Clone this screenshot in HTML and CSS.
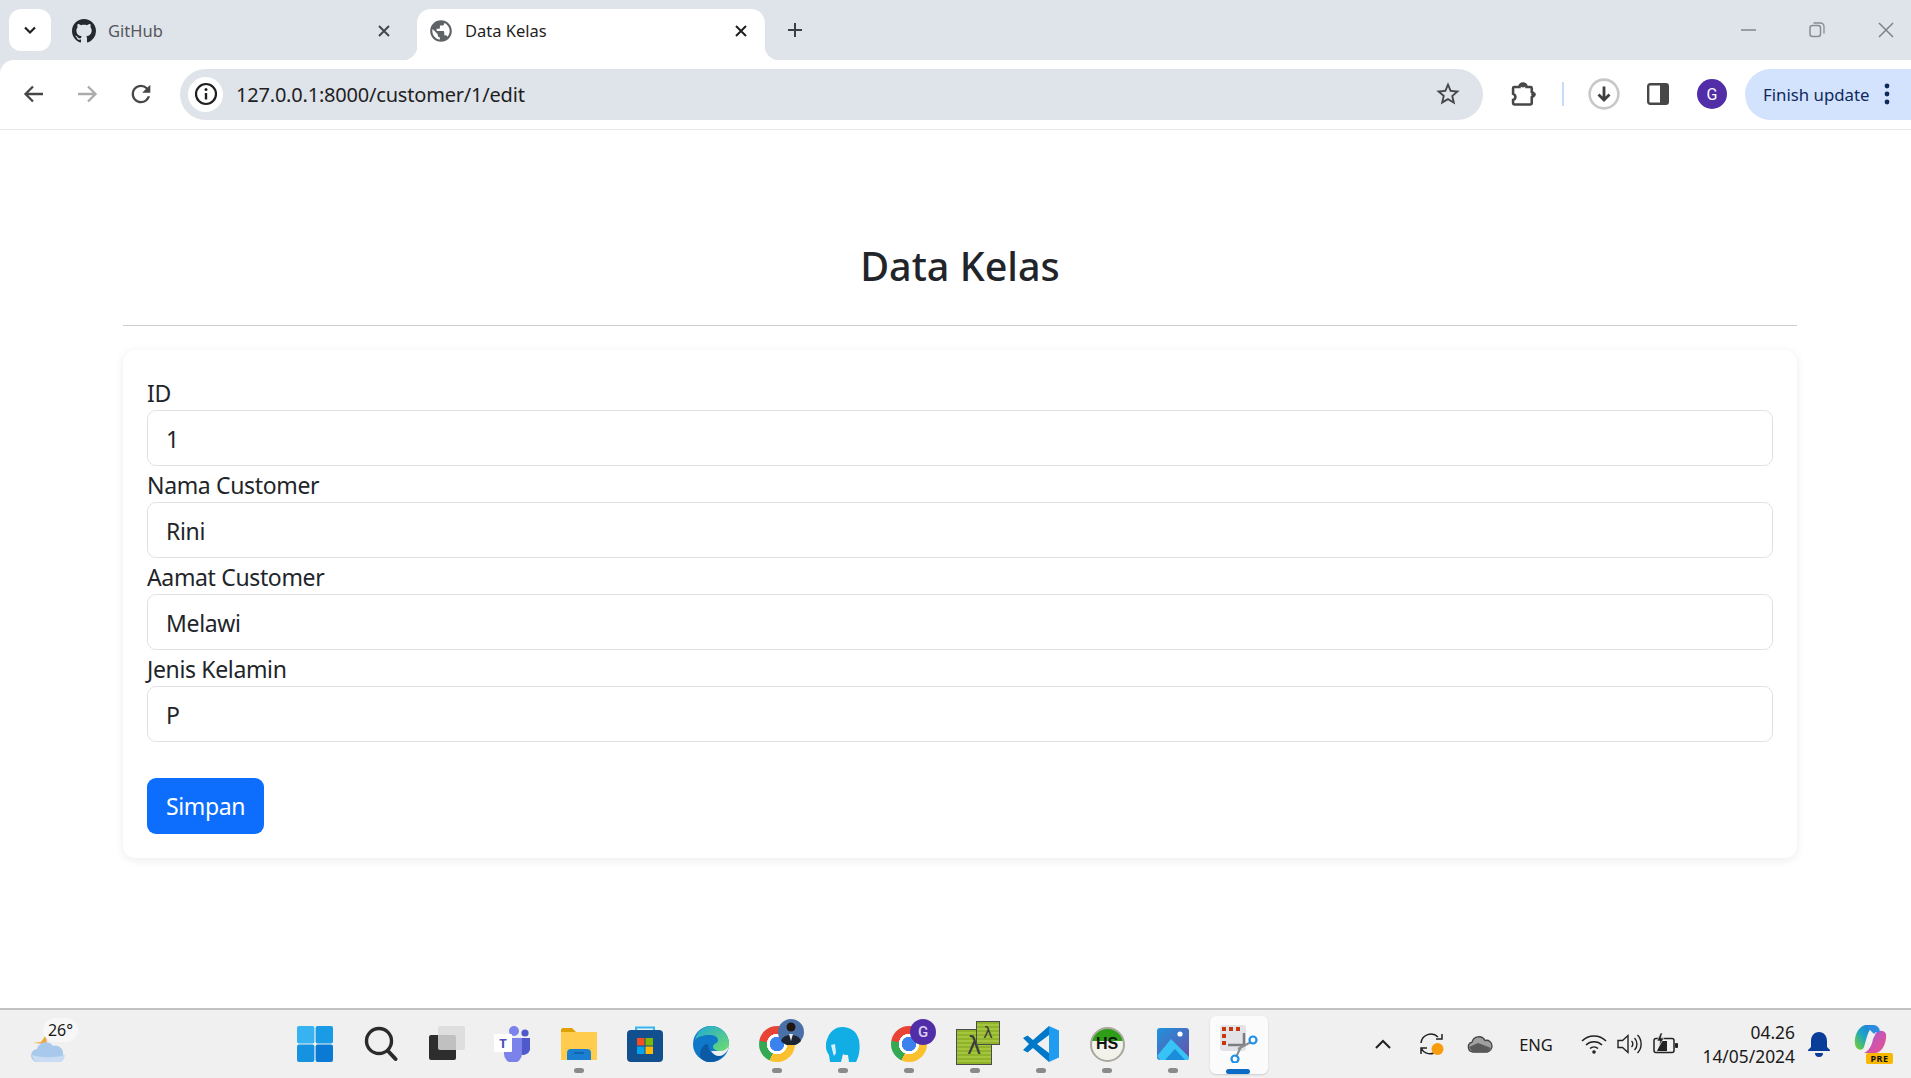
FILE: index.html
```html
<!DOCTYPE html>
<html lang="id">
<head>
  <meta charset="UTF-8">
  <meta name="viewport" content="width=device-width, initial-scale=1">
  <title>Data Kelas</title>
  <link rel="stylesheet" href="styles.css">
</head>
<body>
  <header class="browser">
    <div class="tabstrip">
      <div class="tab-search">
        <svg width="16" height="16" viewBox="0 0 16 16"><path d="M3 5.500l5 5 5-5" fill="none" stroke="#1f1f1f" stroke-width="2.200"/></svg>
      </div>
      <div class="tab">
        <svg class="favicon" width="24" height="24" viewBox="0 0 16 16"><path fill="#24292f" d="M8 0C3.58 0 0 3.58 0 8c0 3.54 2.29 6.53 5.47 7.59.4.07.55-.17.55-.38 0-.19-.01-.82-.01-1.49-2.01.37-2.53-.49-2.69-.94-.09-.23-.48-.94-.82-1.13-.28-.15-.68-.52-.01-.53.63-.01 1.08.58 1.23.82.72 1.21 1.87.87 2.33.66.07-.52.28-.87.51-1.07-1.78-.2-3.64-.89-3.64-3.95 0-.87.31-1.59.82-2.15-.08-.2-.36-1.02.08-2.12 0 0 .67-.21 2.2.82.64-.18 1.32-.27 2-.27.68 0 1.36.09 2 .27 1.53-1.04 2.2-.82 2.2-.82.44 1.1.16 1.92.08 2.12.51.56.82 1.27.82 2.15 0 3.07-1.87 3.75-3.65 3.95.29.25.54.73.54 1.48 0 1.07-.01 1.93-.01 2.2 0 .21.15.46.55.38A8.013 8.013 0 0016 8c0-4.42-3.58-8-8-8z"/></svg>
        <span class="tab-title">GitHub</span>
        <svg class="tab-close" width="14" height="14" viewBox="0 0 14 14"><path d="M2 2l10 10M12 2L2 12" stroke="#45474a" stroke-width="2"/></svg>
      </div>
      <div class="tab active">
        <svg class="favicon" width="26" height="26" viewBox="0 0 24 24"><path fill="#5f6368" d="M12 2C6.48 2 2 6.48 2 12s4.48 10 10 10 10-4.48 10-10S17.52 2 12 2zm-1 17.93c-3.95-.49-7-3.85-7-7.93 0-.62.08-1.21.21-1.79L9 15v1c0 1.1.9 2 2 2v1.93zm6.9-2.54c-.26-.81-1-1.39-1.9-1.39h-1v-3c0-.55-.45-1-1-1H8v-2h2c.55 0 1-.45 1-1V7h2c1.1 0 2-.9 2-2v-.41c2.93 1.19 5 4.06 5 7.41 0 2.08-.8 3.97-2.1 5.39z"/></svg>
        <span class="tab-title">Data Kelas</span>
        <svg class="tab-close" width="14" height="14" viewBox="0 0 14 14"><path d="M2 2l10 10M12 2L2 12" stroke="#1f1f1f" stroke-width="2"/></svg>
      </div>
      <div class="new-tab">
        <svg width="18" height="18" viewBox="0 0 18 18"><path d="M9 2v14M2 9h14" stroke="#3c3f43" stroke-width="2"/></svg>
      </div>
      <div class="window-btns">
        <svg width="16" height="16" viewBox="0 0 16 16"><path d="M1 8h15" stroke="#8a8c8f" stroke-width="1.600"/></svg>
        <svg width="16" height="16" viewBox="0 0 16 16"><rect x="1" y="3.500" width="10.500" height="11" rx="2.500" fill="none" stroke="#8a8c8f" stroke-width="1.500"/><path d="M4.500 1h7a3.500 3.500 0 013.500 3.500v7" fill="none" stroke="#8a8c8f" stroke-width="1.300"/></svg>
        <svg width="16" height="16" viewBox="0 0 16 16"><path d="M1 1l14 14M15 1L1 15" stroke="#808285" stroke-width="1.500"/></svg>
      </div>
    </div>
    <div class="toolbar">
      <svg class="nav-btn" width="24" height="24" viewBox="0 0 24 24"><path d="M21 12H4M11 4.500L3.500 12l7.500 7.500" fill="none" stroke="#474747" stroke-width="2.300"/></svg>
      <svg class="nav-btn" width="24" height="24" viewBox="0 0 24 24"><path d="M3 12h17M13 4.500l7.500 7.500-7.500 7.500" fill="none" stroke="#ababab" stroke-width="2.300"/></svg>
      <svg class="nav-btn" width="28" height="28" viewBox="0 0 24 24"><path fill="#474747" d="M17.650 6.350A7.958 7.958 0 0012 4c-4.420 0-7.990 3.580-7.990 8s3.570 8 7.990 8c3.730 0 6.840-2.550 7.730-6h-2.080A5.990 5.990 0 0112 18c-3.310 0-6-2.690-6-6s2.690-6 6-6c1.660 0 3.140.690 4.220 1.780L13 11h7V4l-2.350 2.350z"/></svg>
      <div class="address">
        <span class="site-info">
          <svg width="24" height="24" viewBox="0 0 24 24"><circle cx="12" cy="12" r="10" fill="none" stroke="#1f1f1f" stroke-width="2.200"/><path d="M12 11v6.500" stroke="#1f1f1f" stroke-width="2.400"/><circle cx="12" cy="7.600" r="1.500" fill="#1f1f1f"/></svg>
        </span>
        <span class="url">127.0.0.1:8000/customer/1/edit</span>
        <svg class="star" width="28" height="28" viewBox="0 0 24 24"><path fill="#474747" d="M22 9.240l-7.190-.620L12 2 9.190 8.630 2 9.240l5.460 4.730L5.820 21 12 17.270 18.180 21l-1.630-7.030L22 9.240zM12 15.400l-3.760 2.270 1-4.280-3.320-2.880 4.380-.380L12 6.100l1.710 4.040 4.380.380-3.320 2.880 1 4.280L12 15.400z"/></svg>
      </div>
      <svg class="puzzle" width="28" height="28" viewBox="0 0 24 24"><path d="M4.500 6H9a3 3 0 016 0h3.500a1 1 0 011 1v3.300a2.300 2.300 0 010 4.400V20a1 1 0 01-1 1h-14a1 1 0 01-1-1v-2.900a2.900 2.900 0 002-2.600 2.900 2.900 0 00-2-2.600V7a1 1 0 011-1z" fill="none" stroke="#474747" stroke-width="2.200"/><circle cx="21" cy="12.500" r="2" fill="#474747"/><circle cx="12" cy="4.500" r="2" fill="#474747"/></svg>
      <span class="tool-sep"></span>
      <svg class="download" width="32" height="32" viewBox="0 0 32 32"><circle cx="16" cy="16" r="14.400" fill="none" stroke="#c8c8c8" stroke-width="2.600"/><path d="M16 8.500v13M10.500 16.500l5.500 5.500 5.500-5.500" fill="none" stroke="#3f3f3f" stroke-width="2.800"/></svg>
      <svg class="panel" width="22" height="22" viewBox="0 0 22 22"><rect x="1.200" y="1.200" width="19.600" height="19.600" rx="2" fill="none" stroke="#474747" stroke-width="2.400"/><rect x="13" y="1" width="8" height="20" fill="#474747"/></svg>
      <span class="avatar">G</span>
      <div class="update-pill">
        <span>Finish update</span>
        <svg width="8" height="24" viewBox="0 0 8 24"><circle cx="4" cy="4" r="2.400" fill="#0f2a5e"/><circle cx="4" cy="12" r="2.400" fill="#0f2a5e"/><circle cx="4" cy="20" r="2.400" fill="#0f2a5e"/></svg>
      </div>
    </div>
  </header>

  <main class="page">
    <h3 class="page-title">Data Kelas</h3>
    <hr class="rule">
    <form class="card">
      <label for="id">ID</label>
      <input id="id" type="text" value="1">
      <label for="nama">Nama Customer</label>
      <input id="nama" type="text" value="Rini">
      <label for="alamat">Aamat Customer</label>
      <input id="alamat" type="text" value="Melawi">
      <label for="jk">Jenis Kelamin</label>
      <input id="jk" type="text" value="P">
      <button class="btn-save" type="button">Simpan</button>
    </form>
  </main>

  <footer class="taskbar">
    <div class="weather">
      <svg width="40" height="34" viewBox="0 0 40 34"><path d="M4 12l8-1 5-7 1 9z" fill="#f0a63a"/><path d="M9 31a6.500 6.500 0 01-1-13 9 9 0 0116-3 7.500 7.500 0 0110 7 8 8 0 01-3 9z" fill="#a9c9ec"/><path d="M3 24c10 3 22 3 33 0-1 5-3 7-5 7H9c-3 0-5-3-6-7z" fill="#c9dcf3"/></svg>
      <span class="temp">26°</span>
    </div>
    <div class="apps">
      <div class="app">
        <svg width="36" height="36" viewBox="0 0 36 36"><rect width="17.400" height="17.400" rx="2" fill="#36b3f0"/><rect x="18.600" width="17.400" height="17.400" rx="2" fill="#1a9be6"/><rect y="18.600" width="17.400" height="17.400" rx="2" fill="#1693e0"/><rect x="18.600" y="18.600" width="17.400" height="17.400" rx="2" fill="#0a7ad4"/></svg>
      </div>
      <div class="app">
        <svg width="34" height="36" viewBox="0 0 34 36"><circle cx="15" cy="15" r="12.500" fill="none" stroke="#2b2b2b" stroke-width="3.400"/><path d="M24 25l7.500 8" stroke="#2b2b2b" stroke-width="4" stroke-linecap="round"/></svg>
      </div>
      <div class="app">
        <svg width="36" height="36" viewBox="0 0 36 36"><rect y="9" width="27" height="25" rx="2" fill="#2d2d2d"/><rect x="9" width="27" height="24" rx="2" fill="#dadada" fill-opacity=".85"/></svg>
      </div>
      <div class="app">
        <svg width="38" height="36" viewBox="0 0 38 36"><circle cx="20" cy="5" r="5" fill="#7b83eb"/><circle cx="31" cy="7" r="3.600" fill="#5059c9"/><path d="M26 12h10v12a7 7 0 01-10 4z" fill="#5059c9"/><path d="M10 12h18v16a9 9 0 01-18 0z" fill="#7b83eb"/><rect y="8" width="18" height="18" rx="1" fill="#fff"/><text class="teams-t" x="9" y="22" text-anchor="middle">T</text></svg>
      </div>
      <div class="app has-dot">
        <svg width="36" height="34" viewBox="0 0 36 34"><path d="M0 3a2 2 0 012-2h9l4 4h21v6H0z" fill="#dfa000"/><rect y="5" width="36" height="28" rx="1" fill="#ffcc4d"/><path d="M6 33v-7a4 4 0 014-4h16a4 4 0 014 4v7z" fill="#1a7fd0"/><path d="M13 26h10" stroke="#0e5ea3" stroke-width="1.500"/></svg>
      </div>
      <div class="app">
        <svg width="36" height="36" viewBox="0 0 36 36"><path d="M9 6V1.500h18V6" fill="none" stroke="#35b8f0" stroke-width="2"/><rect y="4" width="36" height="32" rx="4" fill="#124f8f"/><rect x="10" y="12" width="7.500" height="7.500" fill="#f25022"/><rect x="18.500" y="12" width="7.500" height="7.500" fill="#7fba00"/><rect x="10" y="20.500" width="7.500" height="7.500" fill="#00a4ef"/><rect x="18.500" y="20.500" width="7.500" height="7.500" fill="#ffb900"/></svg>
      </div>
      <div class="app">
        <svg width="36" height="36" viewBox="0 0 36 36"><defs><linearGradient id="edgeTop" x1="0" y1="0" x2="1" y2="1"><stop offset="0" stop-color="#1fa8d8"/><stop offset="1" stop-color="#6fdc6a"/></linearGradient></defs><circle cx="18" cy="18" r="18" fill="#0f78c8"/><path d="M2 14C4 5 11 0 18 0c10 0 18 8 18 18 0 5-4 7-9 7-4 0-7-2-7-4 0-4 5-3 5-7 0-3-4-5-8-5C10 9 4 11 2 14z" fill="url(#edgeTop)"/><path d="M15 18c0 8 6 12 11 12 2 0 4-1 5-2-3 5-8 8-14 8-5 0-8-2-10-6 0-6 3-12 8-12z" fill="#0c5aa5"/><path d="M27 25c5 0 9-3 9-7 0 5-2 8-5 10-1 1-3 2-5 2-3 0-6-2-8-5 3 0 6 0 9 0z" fill="#f0f0f0"/></svg>
      </div>
      <div class="app has-dot">
        <span class="chrome"></span>
        <svg class="badge" width="26" height="26" viewBox="0 0 26 26"><circle cx="13" cy="13" r="13" fill="#4a70a8"/><circle cx="13" cy="8" r="4.500" fill="#20160f"/><path d="M3 22c2-8 18-8 20 0a13 13 0 01-20 0z" fill="#1c2433"/><path d="M11 15h4l-2 7z" fill="#e8e8e8"/></svg>
      </div>
      <div class="app has-dot">
        <svg width="34" height="36" viewBox="0 0 34 36"><path d="M4 36l-1-7c-5-6-3-14-1-18C5 4 11 1 16 1c9 0 15 5 17 13 1 6 1 13-2 20l-1 2h-7l-1-7c-2 0-4 0-5-1l-2 8z" fill="#11aee6"/><path d="M5 19l4-1 1 9-2 3-1-3z" fill="#d9f1fb"/></svg>
      </div>
      <div class="app has-dot">
        <span class="chrome"></span>
        <span class="badge badge-g">G</span>
      </div>
      <div class="app has-dot">
        <div class="lambda-icon">
          <span class="doc doc-big">λ</span>
          <span class="doc doc-small">λ</span>
        </div>
      </div>
      <div class="app has-dot">
        <svg width="36" height="36" viewBox="0 0 36 36"><path d="M26 0l10 4.500v27L26 36z" fill="#1f9cf0"/><path d="M26 0v9L14 18l12 9v9L10 22l-5.500 4.500L0 24l6-6-6-6 4.500-2.500L10 14z" fill="#0078c8"/></svg>
      </div>
      <div class="app has-dot">
        <div class="hs-icon"><span>HS</span></div>
      </div>
      <div class="app has-dot">
        <svg width="32" height="32" viewBox="0 0 32 32"><defs><linearGradient id="photoBg" x1="0" y1="0" x2="1" y2="1"><stop offset="0" stop-color="#1f93dd"/><stop offset="1" stop-color="#6a4fa8"/></linearGradient></defs><rect width="32" height="32" rx="3" fill="url(#photoBg)"/><circle cx="23" cy="6" r="2.600" fill="#fff"/><path d="M0 28l14-17 18 18v1a2 2 0 01-2 2H3z" fill="#37c3f5"/><path d="M8 32l10-11 10 11z" fill="#1b8ddb"/></svg>
      </div>
      <div class="app snip">
        <svg width="38" height="38" viewBox="0 0 38 38"><rect width="26" height="26" rx="3" fill="#e1e3e6"/><path d="M2 2h4v4H2zM9 2h4v4H9zM16 2h4v4h-4zM2 9h4v4H2zM2 16h4v4H2z" fill="#c8360f"/><path d="M24 8v12H8" fill="none" stroke="#7b7d80" stroke-width="2.500"/><path d="M18 24l13-7M22 20l-6 12" stroke="#8a8c8f" stroke-width="2"/><circle cx="33" cy="15" r="3.500" fill="none" stroke="#1e90e8" stroke-width="2.200"/><circle cx="15" cy="34" r="3.500" fill="none" stroke="#1e90e8" stroke-width="2.200"/></svg>
        <span class="snip-bar"></span>
      </div>
    </div>
    <div class="tray">
      <svg class="tray-icon" width="18" height="12" viewBox="0 0 18 12"><path d="M2 10l7-7 7 7" fill="none" stroke="#222" stroke-width="2"/></svg>
      <svg class="tray-sync" width="26" height="26" viewBox="0 0 26 26"><path d="M2 12a10 10 0 0117-6M23 3v5h-6" fill="none" stroke="#222" stroke-width="1.500"/><path d="M2 23v-6h6M2 17a10 10 0 0013 5" fill="none" stroke="#222" stroke-width="1.500"/><circle cx="18.500" cy="18" r="6" fill="#f89c0e"/></svg>
      <svg class="tray-cloud" width="26" height="18" viewBox="0 0 26 18"><path d="M6 17a5 5 0 01-1-9.800A7 7 0 0118 5.500a5.500 5.500 0 017 5.500 6 6 0 01-5 6z" fill="#a0a0a0" stroke="#444" stroke-width="1.300"/><path d="M2 12l9-4 13 5-3 3.400H5z" fill="#5a5a5a"/></svg>
      <span class="lang">ENG</span>
      <svg class="tray-wifi" width="26" height="20" viewBox="0 0 26 20"><path d="M1 7a17 17 0 0124 0M5 11a11.500 11.500 0 0116 0M9 14.500a6 6 0 018 0" fill="none" stroke="#222" stroke-width="1.600"/><circle cx="13" cy="18" r="1.800" fill="#222"/></svg>
      <svg class="tray-vol" width="26" height="22" viewBox="0 0 26 22"><path d="M1 7.500h4.500L11 2.500v17l-5.500-5H1z" fill="none" stroke="#222" stroke-width="1.400"/><path d="M14.500 8a4 4 0 010 6M17.500 5a8.500 8.500 0 010 12M20.500 2a13 13 0 010 18" fill="none" stroke="#222" stroke-width="1.400"/></svg>
      <svg class="tray-bat" width="26" height="22" viewBox="0 0 26 22"><rect x="1" y="5.500" width="20" height="14" rx="2" fill="none" stroke="#222" stroke-width="1.500"/><rect x="22" y="10" width="3" height="5" rx="1" fill="#222"/><path d="M4 18l5-10h5v10z" fill="#222"/><path d="M7.500 0L4 8h3l-1 5 5-8H8l1.500-5z" fill="#222" stroke="#f0f0f0" stroke-width=".6"/></svg>
      <div class="clock">
        <span>04.26</span>
        <span>14/05/2024</span>
      </div>
      <svg class="tray-bell" width="22" height="26" viewBox="0 0 22 26"><path d="M11 1c5 0 8 4 8 9v6l3 3v1H0v-1l3-3v-6c0-5 3-9 8-9z" fill="#0a3d9a"/><path d="M7 22h8a4 4 0 01-8 0z" fill="#0a3d9a"/></svg>
      <div class="copilot">
        <svg width="34" height="30" viewBox="0 0 34 30"><defs><linearGradient id="copA" x1="0" y1="1" x2="1" y2="0"><stop offset="0" stop-color="#7ed321"/><stop offset=".5" stop-color="#1aa5c8"/><stop offset="1" stop-color="#2b6fd8"/></linearGradient><linearGradient id="copB" x1="0" y1="0" x2="1" y2="1"><stop offset="0" stop-color="#a25ad8"/><stop offset="1" stop-color="#f0508a"/></linearGradient></defs><path d="M2 20C1 12 5 3 12 1h10c-5 2-7 8-9 15l-2 7c-1 4-8 4-9-3z" fill="url(#copA)"/><path d="M33 10c1 7-3 18-10 19H11c5-2 8-8 9-14l2-4c1-5 9-6 11-1z" fill="url(#copB)"/><path d="M14 3c2-2 8-3 11 0 2 2 2 4 1 6-2-2-4-1-5 1z" fill="#2b8ce0"/></svg>
        <span class="pre">PRE</span>
      </div>
    </div>
  </footer>
</body>
</html>
```

FILE: styles.css
```css
* {
  box-sizing: border-box;
}
html, body {
  height: 100%;
}
body {
  margin: 0;
  height: 1078px;
  overflow: hidden;
  display: flex;
  flex-direction: column;
  background: #ffffff;
  font-family: "Noto Sans", "Open Sans", sans-serif;
  color: #212529;
}

/* browser chrome */
.browser {
  flex: none;
  background: #dfe3ea;
}
.tabstrip {
  height: 60px;
  padding: 9px 17px 0 9px;
  display: flex;
  align-items: flex-start;
}
.tab-search {
  width: 42px;
  height: 42px;
  background: #ffffff;
  border-radius: 12px;
  display: flex;
  align-items: center;
  justify-content: center;
}
.tab {
  width: 366px;
  height: 51px;
  padding: 0 26px 8px 21px;
  display: flex;
  align-items: center;
  font-size: 16.5px;
  color: #54575c;
  position: relative;
}
.tab .favicon {
  margin-right: 12px;
}
.tab .tab-close {
  margin-left: auto;
}
.tab.active {
  width: 348px;
  padding: 0 17px 8px 11px;
  background: #ffffff;
  color: #1f1f1f;
  border-radius: 14px 14px 0 0;
}
.tab.active .favicon {
  margin-right: 11px;
}
.tab.active::before,
.tab.active::after {
  content: "";
  position: absolute;
  bottom: 0;
  width: 14px;
  height: 14px;
}
.tab.active::before {
  left: -14px;
  background: radial-gradient(circle at 0 0, #dfe3ea 14px, #ffffff 14.5px);
}
.tab.active::after {
  right: -14px;
  background: radial-gradient(circle at 100% 0, #dfe3ea 14px, #ffffff 14.5px);
}
.new-tab {
  margin: 9px 0 0 21px;
  height: 24px;
  display: flex;
  align-items: center;
}
.window-btns {
  margin-left: auto;
  margin-top: 13px;
  display: flex;
  gap: 53px;
}
.toolbar {
  height: 70px;
  background: #ffffff;
  border-top-left-radius: 14px;
  border-bottom: 1px solid #e6e6e6;
  display: flex;
  align-items: center;
  padding: 0 0 1px 22px;
}
.nav-btn {
  margin-right: 29px;
}
.nav-btn:nth-child(2) {
  margin-right: 28px;
}
.nav-btn:nth-child(3) {
  margin-right: 25px;
}
.address {
  width: 1303px;
  height: 51px;
  background: #dfe3ea;
  border-radius: 26px;
  display: flex;
  align-items: center;
  padding: 0 21px 0 8px;
}
.site-info {
  width: 35px;
  height: 35px;
  background: #ffffff;
  border-radius: 50%;
  display: flex;
  align-items: center;
  justify-content: center;
}
.url {
  margin-left: 13px;
  font-size: 20px;
  letter-spacing: -0.2px;
  color: #1f1f1f;
}
.star {
  margin-left: auto;
}
.puzzle {
  margin-left: 26px;
}
.tool-sep {
  width: 2px;
  height: 24px;
  margin-left: 25px;
  background: #c7dcf8;
}
.download {
  margin-left: 24px;
}
.panel {
  margin-left: 27px;
}
.avatar {
  width: 30px;
  height: 30px;
  margin-left: 28px;
  border-radius: 50%;
  background: #512da8;
  color: #ffffff;
  font-family: Roboto, sans-serif;
  font-size: 16px;
  display: flex;
  align-items: center;
  justify-content: center;
}
.update-pill {
  flex: 1;
  height: 51px;
  margin-left: 18px;
  background: #d3e3fd;
  border-radius: 26px 0 0 26px;
  display: flex;
  align-items: center;
  justify-content: space-between;
  padding: 0 20px 0 18px;
  font-size: 16.8px;
  color: #0f2a5e;
}

/* page content */
.page {
  flex: 1;
  padding: 112px 114px 0 123px;
}
.page-title {
  margin: 0 0 35px;
  font-size: 39.5px;
  line-height: 48px;
  font-weight: 500;
  text-align: center;
}
.rule {
  margin: 0 0 24px;
  border: 0;
  border-top: 1.5px solid #cdcdcd;
}
.card {
  padding: 24px;
  background: #ffffff;
  border-radius: 12px;
  box-shadow: 0 2px 10px rgba(0, 0, 0, 0.08);
}
.card label {
  display: block;
  padding-top: 2px;
  font-size: 23px;
  line-height: 34px;
  letter-spacing: -0.35px;
}
.card input {
  display: block;
  width: 100%;
  height: 56px;
  padding: 1px 18px 0;
  border: 1.5px solid #dee2e6;
  border-radius: 9px;
  font: inherit;
  font-size: 23px;
  letter-spacing: -0.35px;
  color: #212529;
  outline: none;
}
.btn-save {
  display: block;
  height: 56px;
  width: 117px;
  margin-top: 36px;
  padding: 0;
  border: 0;
  border-radius: 9px;
  background: #0d6efd;
  color: #ffffff;
  font: inherit;
  font-size: 23px;
  letter-spacing: -0.35px;
}

/* windows taskbar */
.taskbar {
  flex: none;
  height: 70px;
  background: #f0f0f0;
  border-top: 2px solid #c2c2c2;
  display: flex;
}
.weather {
  width: 282px;
  position: relative;
  flex: none;
}
.weather svg {
  position: absolute;
  left: 29px;
  top: 21px;
}
.temp {
  position: absolute;
  left: 43px;
  top: 8px;
  width: 35px;
  height: 24px;
  background: #f7f7f7;
  border-radius: 12px;
  font-size: 16px;
  line-height: 24px;
  text-align: center;
  color: #1a1a1a;
}
.apps {
  display: flex;
}
.app {
  width: 66px;
  flex: none;
  display: flex;
  align-items: center;
  justify-content: center;
  position: relative;
}
.app.has-dot::after {
  content: "";
  position: absolute;
  left: 28px;
  bottom: 5px;
  width: 10px;
  height: 5px;
  border-radius: 3px;
  background: #8a8a8a;
}
.teams-t {
  font-family: "Noto Sans", sans-serif;
  font-size: 13px;
  font-weight: 700;
  fill: #4b53bc;
}
.chrome {
  width: 36px;
  height: 36px;
  border-radius: 50%;
  background: radial-gradient(circle, #3b82ef 0 7px, #ffffff 7.5px 10px, transparent 10.5px),
    conic-gradient(from -80deg, #e94335 0 165deg, #fbc02d 165deg 285deg, #34a853 285deg 360deg);
}
.badge {
  position: absolute;
  left: 34px;
  top: 9px;
}
.badge-g {
  width: 26px;
  height: 26px;
  border-radius: 50%;
  background: #512da8;
  color: #d9cff0;
  font-family: Roboto, sans-serif;
  font-size: 15px;
  font-weight: 500;
  display: flex;
  align-items: center;
  justify-content: center;
}
.lambda-icon {
  width: 44px;
  height: 44px;
  margin-left: 6px;
  margin-bottom: 2px;
  position: relative;
}
.doc {
  position: absolute;
  border: 1.5px solid #4c4c4c;
  background: repeating-linear-gradient(#8fb32a 0 2px, #a5c63c 2px 4px);
  color: #3c3c3c;
  font-family: "DejaVu Sans", sans-serif;
  text-align: center;
}
.doc-big {
  left: 0;
  bottom: 0;
  width: 36px;
  height: 36px;
  font-size: 24px;
  line-height: 33px;
}
.doc-small {
  right: 0;
  top: 0;
  width: 24px;
  height: 24px;
  font-size: 16px;
  line-height: 21px;
}
.hs-icon {
  width: 35px;
  height: 35px;
  border-radius: 50%;
  border: 2px solid #a8a8a0;
  background: linear-gradient(#2e9e16 0 40%, #f2f2ea 40%);
  display: flex;
  align-items: center;
  justify-content: center;
  font-family: "Liberation Sans", sans-serif;
  font-size: 16px;
  font-weight: 700;
  color: #111111;
}
.snip {
  width: 58px;
  height: 58px;
  margin: 6px 0 0 4px;
  background: #fbfbfb;
  border-radius: 6px;
  box-shadow: 0 1px 2px rgba(0, 0, 0, 0.15);
  padding-bottom: 2px;
}
.snip-bar {
  position: absolute;
  left: 16px;
  bottom: 0;
  width: 24px;
  height: 5px;
  border-radius: 3px;
  background: #0a6cc4;
}
.tray {
  margin-left: auto;
  padding-right: 18px;
  display: flex;
  align-items: center;
}
.tray-icon {
  margin-right: 27px;
}
.tray-sync {
  margin-right: 22px;
}
.tray-cloud {
  margin-right: 25px;
}
.lang {
  width: 36px;
  margin-right: 27px;
  font-size: 16.5px;
  text-align: center;
  color: #1a1a1a;
}
.tray-wifi {
  margin-right: 10px;
}
.tray-vol {
  margin-right: 10px;
}
.clock {
  width: 116px;
  display: flex;
  flex-direction: column;
  align-items: flex-end;
  gap: 2px;
  font-size: 17.4px;
  line-height: 22px;
  color: #1a1a1a;
}
.tray-bell {
  margin-left: 13px;
}
.copilot {
  width: 40px;
  height: 40px;
  margin-left: 23px;
  position: relative;
}
.pre {
  position: absolute;
  right: 0;
  bottom: 0;
  width: 27px;
  height: 11px;
  border-radius: 2px;
  background: #f9b800;
  color: #111111;
  font-size: 9px;
  font-weight: 700;
  line-height: 11px;
  text-align: center;
  letter-spacing: 0.5px;
}
```
